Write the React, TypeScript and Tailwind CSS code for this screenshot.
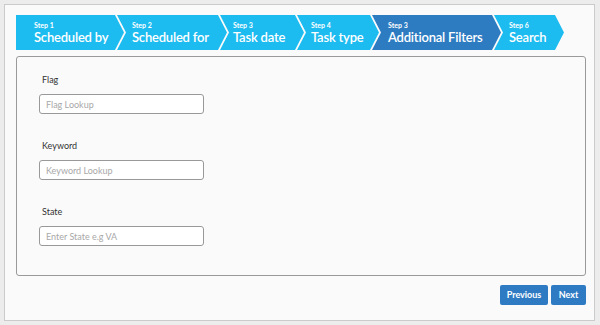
const steps = [
  { n: 1, label: 'Scheduled by', w: 'w-[108px]', pl: 'pl-[18px]', first: true },
  { n: 2, label: 'Scheduled for', w: 'w-[110px]', pl: 'pl-[15px]' },
  { n: 3, label: 'Task date', w: 'w-[84px]', pl: 'pl-[13px]' },
  { n: 4, label: 'Task type', w: 'w-[82px]', pl: 'pl-[14px]' },
  { n: 5, label: 'Additional Filters', w: 'w-[129px]', pl: 'pl-[16px]', active: true },
  { n: 6, label: 'Search', w: 'w-[70px]', pl: 'pl-[15px]' },
];

const fields = [
  { label: 'Flag', placeholder: 'Flag Lookup' },
  { label: 'Keyword', placeholder: 'Keyword Lookup' },
  { label: 'State', placeholder: 'Enter State e.g VA' },
];

export default function App() {
  return (
    <div className="w-[600px] h-[325px] bg-[#ececec] pt-[4px] pl-[4px] pr-[5px] pb-[4px] font-['Lato','Liberation_Sans',sans-serif]">
      <div className="h-full border border-[#cbcbcb] bg-[#fafafa] pt-[10px] pl-[11px] pr-[8px]">
        {/* wizard steps */}
        <div className="flex h-[35px]">
          {steps.map(s => (
            <div
              key={s.n}
              className={`${s.w} ${s.pl} shrink-0 flex flex-col justify-center text-white ${s.active ? 'bg-[#2d7cc2]' : 'bg-[#1cbcf0]'} ${
                s.first
                  ? '[clip-path:polygon(0_0,calc(100%-9px)_0,100%_50%,calc(100%-9px)_100%,0_100%)]'
                  : '-ml-[7px] [clip-path:polygon(0_0,calc(100%-9px)_0,100%_50%,calc(100%-9px)_100%,0_100%,9px_50%)]'
              }`}
            >
              <div className="text-[7px] font-bold leading-[8px] mt-[1px]">Step {s.n === 5 ? 3 : s.n}</div>
              <div className="text-[13px] font-semibold leading-[17px] tracking-[-0.2px] whitespace-nowrap">{s.label}</div>
            </div>
          ))}
        </div>

        <div className="mt-[6px] h-[220px] border border-[#9a9a9a] rounded-[3px] bg-[#fafafa] pt-[17px] pl-[22px] flex flex-col gap-[26px]">
          {fields.map(f => (
            <div key={f.label} className="flex flex-col">
              <label className="ml-[3px] text-[9px] leading-[12px] text-[#333] mb-[8px]">{f.label}</label>
              <input
                placeholder={f.placeholder}
                className="w-[165px] h-[20px] bg-white border border-[#999] rounded-[3px] px-[6px] text-[9px] placeholder:text-[#a8a8a8] outline-none"
              />
            </div>
          ))}
        </div>

        <div className="mt-[9px] flex justify-end gap-[3px]">
          <button className="w-[48px] h-[20px] bg-[#2f7bc3] rounded-[2px] text-white text-[9px] font-bold">Previous</button>
          <button className="w-[35px] h-[20px] bg-[#2f7bc3] rounded-[2px] text-white text-[9px] font-bold">Next</button>
        </div>
      </div>
    </div>
  );
}
